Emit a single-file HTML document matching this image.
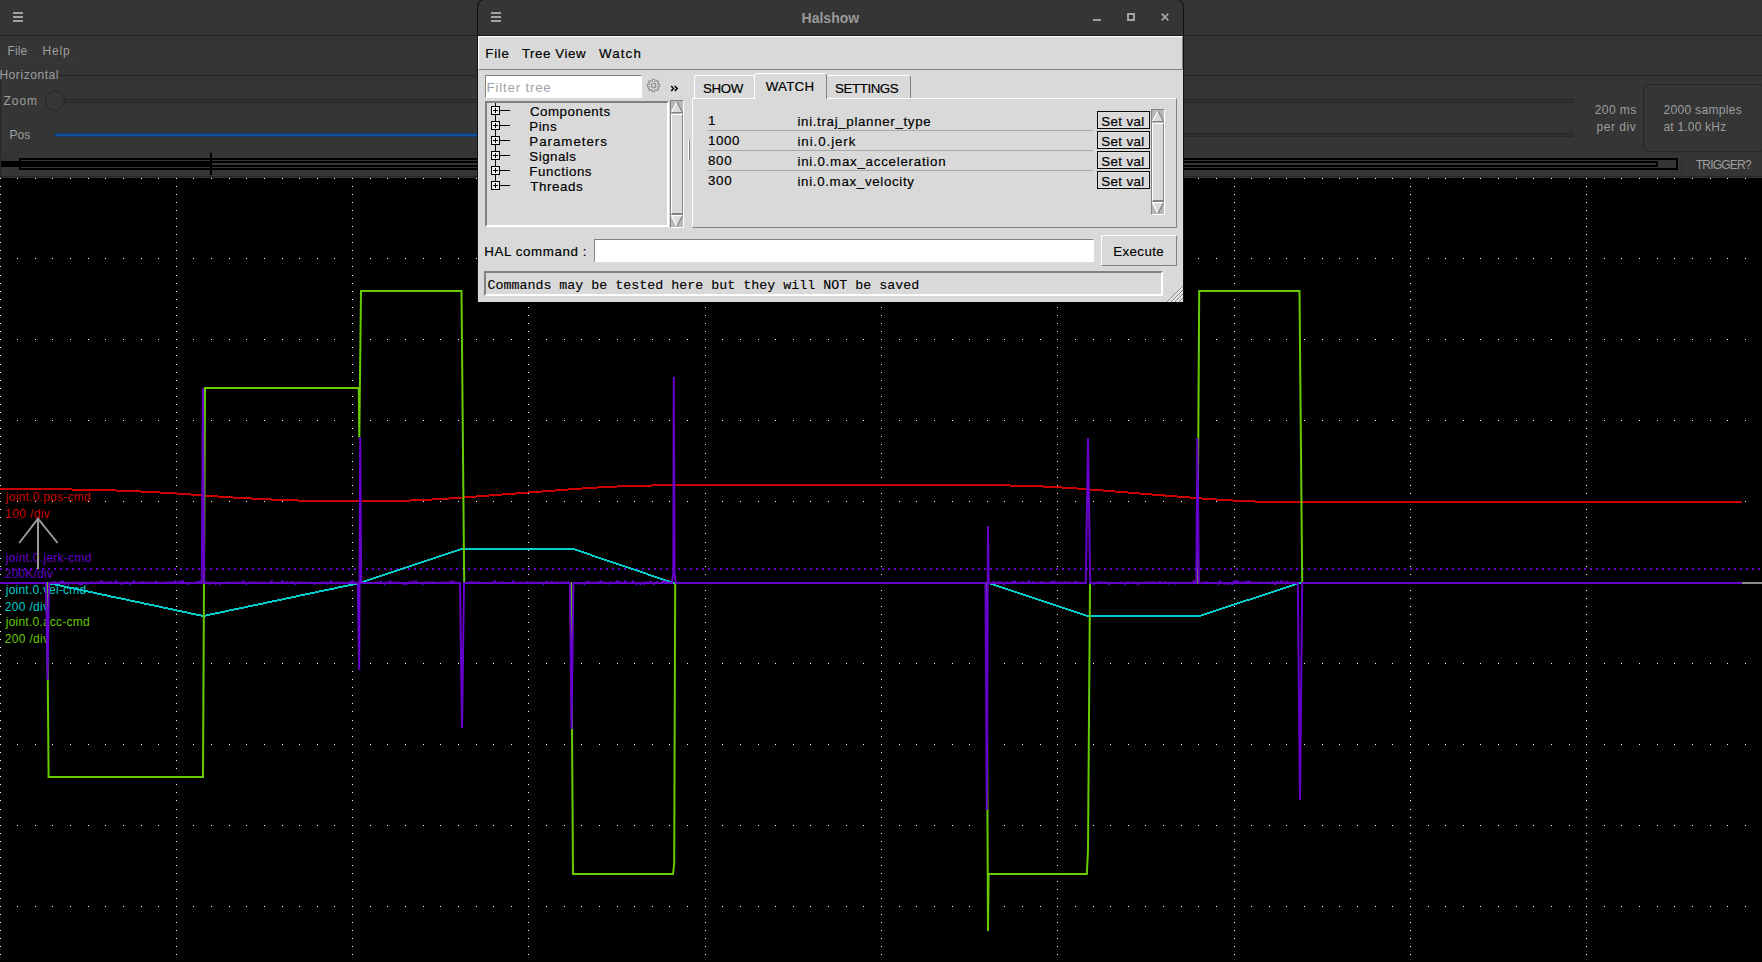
<!DOCTYPE html>
<html><head><meta charset="utf-8"><title>Halscope</title>
<style>
html,body{margin:0;padding:0;}
body{width:1762px;height:962px;overflow:hidden;background:#353535;position:relative;
 font-family:"Liberation Sans",sans-serif;font-size:12px;color:#9e9e9e;}
html{overflow:hidden;}
div,span,svg{position:absolute;box-sizing:border-box;}
#root{left:0;top:0;width:1762px;height:962px;overflow:hidden;}
.t{white-space:nowrap;line-height:16px;height:16px;}
/* ---------------- halscope chrome */
#sc-title{left:0;top:0;width:1762px;height:35px;background:#353535;}
#sc-titleline{left:0;top:35px;width:1762px;height:1px;background:#222222;}
.hb{background:#a2a2a2;height:2px;width:10px;}
#sc-menu-sep{left:0;top:62px;width:77px;height:1px;background:#3b3b3b;}
#fr-top{left:58px;top:75px;width:1704px;height:1px;background:#242424;}
#fr-left{left:0;top:80px;width:1px;height:97px;background:#272727;}
#zoom-knob{left:45px;top:91px;width:20px;height:20px;border:1px solid #252525;border-radius:50%;background:#363636;}
#zoom-tr{left:64px;top:99px;width:1510px;height:4px;border:1px solid #272727;border-left:none;border-radius:0 2px 2px 0;background:#303030;}
#pos-tr{left:54px;top:133px;width:1520px;height:4px;border:1px solid #272727;border-radius:2px;background:#303030;}
#pos-hl{left:54px;top:133px;width:700px;height:4px;border:1px solid #12386a;border-radius:2px;background:#15539e;}
#info-fr{left:1643px;top:84px;width:122px;height:68px;border:1px solid #262626;border-radius:6px;}
#bar-sep{left:1px;top:152px;width:1761px;height:1px;background:#313131;}
#trig-sep{left:1681px;top:153px;width:1px;height:24px;background:#2f2f2f;}
#sc-bottom{left:0;top:176px;width:1762px;height:1px;background:#262626;}
.blk{background:#000;}
.plot{left:0;top:178px;}
.lbl{font-size:12px;line-height:16px;height:16px;white-space:nowrap;left:5px;}
/* ---------------- halshow */
#hs{left:477px;top:-1px;width:707px;height:303px;background:#353535;border-radius:8px 8px 0 0;border:1px solid #111;border-bottom:none;overflow:hidden;}
#hs-client{left:0;top:36px;width:705px;height:266px;background:#d9d9d9;}
#hs-tl{left:478px;top:35px;width:705px;height:1px;background:#161616;}
.k{white-space:nowrap;line-height:16px;height:16px;color:#000;font-size:13.33px;-webkit-text-stroke:0.18px #000;}
.sunk1{border-top:1px solid #828282;border-left:1px solid #828282;border-bottom:1px solid #fff;border-right:1px solid #fff;}
.sunk2{border-top:2px solid #828282;border-left:2px solid #828282;border-bottom:2px solid #fff;border-right:2px solid #fff;}
.sv{border:1px solid #0a0a0a;box-shadow:inset 0 0 0 1px #e0e0e0;}
.ttl{white-space:nowrap;line-height:16px;height:16px;font-weight:bold;font-size:14px;color:#999;}
#k-mono{height:16px;line-height:16px;font-family:"Liberation Mono",monospace;font-size:13.33px;color:#000;white-space:pre;-webkit-text-stroke:0.12px #000;}

</style></head>
<body>
<div id="root">
<div id="sc-title"></div>
<div class="hb" style="left:13px;top:12px"></div>
<div class="hb" style="left:13px;top:16px"></div>
<div class="hb" style="left:13px;top:20px"></div>
<div id="sc-titleline"></div>
<span class="t" style="left:7.48px;top:43.00px;letter-spacing:0.100px;">File</span>
<span class="t" style="left:42.38px;top:43.00px;letter-spacing:0.903px;">Help</span>
<div id="sc-menu-sep"></div><div id="fr-top"></div><div id="fr-left"></div>
<span class="t" style="left:-0.62px;top:67.00px;letter-spacing:0.566px;">Horizontal</span>
<span class="t" style="left:3.58px;top:93.00px;letter-spacing:0.897px;">Zoom</span>
<div id="zoom-tr"></div><div id="zoom-knob"></div>
<span class="t" style="left:9.58px;top:127.00px;letter-spacing:-0.050px;">Pos</span>
<div id="pos-tr"></div><div id="pos-hl"></div>
<span class="t" style="left:1594.65px;top:102.00px;letter-spacing:0.467px;">200 ms</span>
<span class="t" style="left:1596.50px;top:119.00px;letter-spacing:0.523px;">per div</span>
<div id="info-fr"></div>
<span class="t" style="left:1663.45px;top:102.00px;letter-spacing:0.329px;">2000 samples</span>
<span class="t" style="left:1663.50px;top:119.00px;letter-spacing:0.195px;">at 1.00 kHz</span>
<div id="bar-sep"></div><div id="trig-sep"></div>
<span class="t" style="left:1695.77px;top:157.00px;letter-spacing:-0.792px;">TRIGGER?</span>
<div class="blk" style="left:1px;top:161px;width:211px;height:6px"></div>
<div style="left:19px;top:158px;width:1659px;height:12px;border:2px solid #000"></div>
<div style="left:210px;top:161px;width:1448px;height:6px;border:2px solid #000"></div>
<div class="blk" style="left:210px;top:153px;width:2px;height:22px"></div>
<div id="sc-bottom"></div>
<svg class="plot" width="1762" height="784" viewBox="0 178 1762 784">
<rect x="0" y="178" width="1762" height="784" fill="#000"/>
<path d="M0 178h1v1h-1zM0 186h1v1h-1zM0 194h1v1h-1zM0 202h1v1h-1zM0 210h1v1h-1zM0 218h1v1h-1zM0 226h1v1h-1zM0 234h1v1h-1zM0 242h1v1h-1zM0 250h1v1h-1zM0 258h1v1h-1zM0 266h1v1h-1zM0 275h1v1h-1zM0 283h1v1h-1zM0 291h1v1h-1zM0 299h1v1h-1zM0 307h1v1h-1zM0 315h1v1h-1zM0 323h1v1h-1zM0 331h1v1h-1zM0 339h1v1h-1zM0 347h1v1h-1zM0 355h1v1h-1zM0 364h1v1h-1zM0 372h1v1h-1zM0 380h1v1h-1zM0 388h1v1h-1zM0 396h1v1h-1zM0 404h1v1h-1zM0 412h1v1h-1zM0 420h1v1h-1zM0 428h1v1h-1zM0 436h1v1h-1zM0 444h1v1h-1zM0 453h1v1h-1zM0 461h1v1h-1zM0 469h1v1h-1zM0 477h1v1h-1zM0 485h1v1h-1zM0 493h1v1h-1zM0 501h1v1h-1zM0 509h1v1h-1zM0 517h1v1h-1zM0 525h1v1h-1zM0 533h1v1h-1zM0 542h1v1h-1zM0 550h1v1h-1zM0 558h1v1h-1zM0 566h1v1h-1zM0 574h1v1h-1zM0 582h1v1h-1zM0 590h1v1h-1zM0 598h1v1h-1zM0 606h1v1h-1zM0 614h1v1h-1zM0 622h1v1h-1zM0 631h1v1h-1zM0 639h1v1h-1zM0 647h1v1h-1zM0 655h1v1h-1zM0 663h1v1h-1zM0 671h1v1h-1zM0 679h1v1h-1zM0 687h1v1h-1zM0 695h1v1h-1zM0 703h1v1h-1zM0 711h1v1h-1zM0 720h1v1h-1zM0 728h1v1h-1zM0 736h1v1h-1zM0 744h1v1h-1zM0 752h1v1h-1zM0 760h1v1h-1zM0 768h1v1h-1zM0 776h1v1h-1zM0 784h1v1h-1zM0 792h1v1h-1zM0 800h1v1h-1zM0 809h1v1h-1zM0 817h1v1h-1zM0 825h1v1h-1zM0 833h1v1h-1zM0 841h1v1h-1zM0 849h1v1h-1zM0 857h1v1h-1zM0 865h1v1h-1zM0 873h1v1h-1zM0 881h1v1h-1zM0 889h1v1h-1zM0 898h1v1h-1zM0 906h1v1h-1zM0 914h1v1h-1zM0 922h1v1h-1zM0 930h1v1h-1zM0 938h1v1h-1zM0 946h1v1h-1zM0 954h1v1h-1zM17 178h1v1h-1zM17 258h1v1h-1zM17 339h1v1h-1zM17 420h1v1h-1zM17 501h1v1h-1zM17 582h1v1h-1zM17 663h1v1h-1zM17 744h1v1h-1zM17 825h1v1h-1zM17 906h1v1h-1zM35 178h1v1h-1zM35 258h1v1h-1zM35 339h1v1h-1zM35 420h1v1h-1zM35 501h1v1h-1zM35 582h1v1h-1zM35 663h1v1h-1zM35 744h1v1h-1zM35 825h1v1h-1zM35 906h1v1h-1zM52 178h1v1h-1zM52 258h1v1h-1zM52 339h1v1h-1zM52 420h1v1h-1zM52 501h1v1h-1zM52 582h1v1h-1zM52 663h1v1h-1zM52 744h1v1h-1zM52 825h1v1h-1zM52 906h1v1h-1zM70 178h1v1h-1zM70 258h1v1h-1zM70 339h1v1h-1zM70 420h1v1h-1zM70 501h1v1h-1zM70 582h1v1h-1zM70 663h1v1h-1zM70 744h1v1h-1zM70 825h1v1h-1zM70 906h1v1h-1zM88 178h1v1h-1zM88 258h1v1h-1zM88 339h1v1h-1zM88 420h1v1h-1zM88 501h1v1h-1zM88 582h1v1h-1zM88 663h1v1h-1zM88 744h1v1h-1zM88 825h1v1h-1zM88 906h1v1h-1zM105 178h1v1h-1zM105 258h1v1h-1zM105 339h1v1h-1zM105 420h1v1h-1zM105 501h1v1h-1zM105 582h1v1h-1zM105 663h1v1h-1zM105 744h1v1h-1zM105 825h1v1h-1zM105 906h1v1h-1zM123 178h1v1h-1zM123 258h1v1h-1zM123 339h1v1h-1zM123 420h1v1h-1zM123 501h1v1h-1zM123 582h1v1h-1zM123 663h1v1h-1zM123 744h1v1h-1zM123 825h1v1h-1zM123 906h1v1h-1zM141 178h1v1h-1zM141 258h1v1h-1zM141 339h1v1h-1zM141 420h1v1h-1zM141 501h1v1h-1zM141 582h1v1h-1zM141 663h1v1h-1zM141 744h1v1h-1zM141 825h1v1h-1zM141 906h1v1h-1zM158 178h1v1h-1zM158 258h1v1h-1zM158 339h1v1h-1zM158 420h1v1h-1zM158 501h1v1h-1zM158 582h1v1h-1zM158 663h1v1h-1zM158 744h1v1h-1zM158 825h1v1h-1zM158 906h1v1h-1zM176 178h1v1h-1zM176 186h1v1h-1zM176 194h1v1h-1zM176 202h1v1h-1zM176 210h1v1h-1zM176 218h1v1h-1zM176 226h1v1h-1zM176 234h1v1h-1zM176 242h1v1h-1zM176 250h1v1h-1zM176 258h1v1h-1zM176 266h1v1h-1zM176 275h1v1h-1zM176 283h1v1h-1zM176 291h1v1h-1zM176 299h1v1h-1zM176 307h1v1h-1zM176 315h1v1h-1zM176 323h1v1h-1zM176 331h1v1h-1zM176 339h1v1h-1zM176 347h1v1h-1zM176 355h1v1h-1zM176 364h1v1h-1zM176 372h1v1h-1zM176 380h1v1h-1zM176 388h1v1h-1zM176 396h1v1h-1zM176 404h1v1h-1zM176 412h1v1h-1zM176 420h1v1h-1zM176 428h1v1h-1zM176 436h1v1h-1zM176 444h1v1h-1zM176 453h1v1h-1zM176 461h1v1h-1zM176 469h1v1h-1zM176 477h1v1h-1zM176 485h1v1h-1zM176 493h1v1h-1zM176 501h1v1h-1zM176 509h1v1h-1zM176 517h1v1h-1zM176 525h1v1h-1zM176 533h1v1h-1zM176 542h1v1h-1zM176 550h1v1h-1zM176 558h1v1h-1zM176 566h1v1h-1zM176 574h1v1h-1zM176 582h1v1h-1zM176 590h1v1h-1zM176 598h1v1h-1zM176 606h1v1h-1zM176 614h1v1h-1zM176 622h1v1h-1zM176 631h1v1h-1zM176 639h1v1h-1zM176 647h1v1h-1zM176 655h1v1h-1zM176 663h1v1h-1zM176 671h1v1h-1zM176 679h1v1h-1zM176 687h1v1h-1zM176 695h1v1h-1zM176 703h1v1h-1zM176 711h1v1h-1zM176 720h1v1h-1zM176 728h1v1h-1zM176 736h1v1h-1zM176 744h1v1h-1zM176 752h1v1h-1zM176 760h1v1h-1zM176 768h1v1h-1zM176 776h1v1h-1zM176 784h1v1h-1zM176 792h1v1h-1zM176 800h1v1h-1zM176 809h1v1h-1zM176 817h1v1h-1zM176 825h1v1h-1zM176 833h1v1h-1zM176 841h1v1h-1zM176 849h1v1h-1zM176 857h1v1h-1zM176 865h1v1h-1zM176 873h1v1h-1zM176 881h1v1h-1zM176 889h1v1h-1zM176 898h1v1h-1zM176 906h1v1h-1zM176 914h1v1h-1zM176 922h1v1h-1zM176 930h1v1h-1zM176 938h1v1h-1zM176 946h1v1h-1zM176 954h1v1h-1zM193 178h1v1h-1zM193 258h1v1h-1zM193 339h1v1h-1zM193 420h1v1h-1zM193 501h1v1h-1zM193 582h1v1h-1zM193 663h1v1h-1zM193 744h1v1h-1zM193 825h1v1h-1zM193 906h1v1h-1zM211 178h1v1h-1zM211 258h1v1h-1zM211 339h1v1h-1zM211 420h1v1h-1zM211 501h1v1h-1zM211 582h1v1h-1zM211 663h1v1h-1zM211 744h1v1h-1zM211 825h1v1h-1zM211 906h1v1h-1zM229 178h1v1h-1zM229 258h1v1h-1zM229 339h1v1h-1zM229 420h1v1h-1zM229 501h1v1h-1zM229 582h1v1h-1zM229 663h1v1h-1zM229 744h1v1h-1zM229 825h1v1h-1zM229 906h1v1h-1zM246 178h1v1h-1zM246 258h1v1h-1zM246 339h1v1h-1zM246 420h1v1h-1zM246 501h1v1h-1zM246 582h1v1h-1zM246 663h1v1h-1zM246 744h1v1h-1zM246 825h1v1h-1zM246 906h1v1h-1zM264 178h1v1h-1zM264 258h1v1h-1zM264 339h1v1h-1zM264 420h1v1h-1zM264 501h1v1h-1zM264 582h1v1h-1zM264 663h1v1h-1zM264 744h1v1h-1zM264 825h1v1h-1zM264 906h1v1h-1zM282 178h1v1h-1zM282 258h1v1h-1zM282 339h1v1h-1zM282 420h1v1h-1zM282 501h1v1h-1zM282 582h1v1h-1zM282 663h1v1h-1zM282 744h1v1h-1zM282 825h1v1h-1zM282 906h1v1h-1zM299 178h1v1h-1zM299 258h1v1h-1zM299 339h1v1h-1zM299 420h1v1h-1zM299 501h1v1h-1zM299 582h1v1h-1zM299 663h1v1h-1zM299 744h1v1h-1zM299 825h1v1h-1zM299 906h1v1h-1zM317 178h1v1h-1zM317 258h1v1h-1zM317 339h1v1h-1zM317 420h1v1h-1zM317 501h1v1h-1zM317 582h1v1h-1zM317 663h1v1h-1zM317 744h1v1h-1zM317 825h1v1h-1zM317 906h1v1h-1zM334 178h1v1h-1zM334 258h1v1h-1zM334 339h1v1h-1zM334 420h1v1h-1zM334 501h1v1h-1zM334 582h1v1h-1zM334 663h1v1h-1zM334 744h1v1h-1zM334 825h1v1h-1zM334 906h1v1h-1zM352 178h1v1h-1zM352 186h1v1h-1zM352 194h1v1h-1zM352 202h1v1h-1zM352 210h1v1h-1zM352 218h1v1h-1zM352 226h1v1h-1zM352 234h1v1h-1zM352 242h1v1h-1zM352 250h1v1h-1zM352 258h1v1h-1zM352 266h1v1h-1zM352 275h1v1h-1zM352 283h1v1h-1zM352 291h1v1h-1zM352 299h1v1h-1zM352 307h1v1h-1zM352 315h1v1h-1zM352 323h1v1h-1zM352 331h1v1h-1zM352 339h1v1h-1zM352 347h1v1h-1zM352 355h1v1h-1zM352 364h1v1h-1zM352 372h1v1h-1zM352 380h1v1h-1zM352 388h1v1h-1zM352 396h1v1h-1zM352 404h1v1h-1zM352 412h1v1h-1zM352 420h1v1h-1zM352 428h1v1h-1zM352 436h1v1h-1zM352 444h1v1h-1zM352 453h1v1h-1zM352 461h1v1h-1zM352 469h1v1h-1zM352 477h1v1h-1zM352 485h1v1h-1zM352 493h1v1h-1zM352 501h1v1h-1zM352 509h1v1h-1zM352 517h1v1h-1zM352 525h1v1h-1zM352 533h1v1h-1zM352 542h1v1h-1zM352 550h1v1h-1zM352 558h1v1h-1zM352 566h1v1h-1zM352 574h1v1h-1zM352 582h1v1h-1zM352 590h1v1h-1zM352 598h1v1h-1zM352 606h1v1h-1zM352 614h1v1h-1zM352 622h1v1h-1zM352 631h1v1h-1zM352 639h1v1h-1zM352 647h1v1h-1zM352 655h1v1h-1zM352 663h1v1h-1zM352 671h1v1h-1zM352 679h1v1h-1zM352 687h1v1h-1zM352 695h1v1h-1zM352 703h1v1h-1zM352 711h1v1h-1zM352 720h1v1h-1zM352 728h1v1h-1zM352 736h1v1h-1zM352 744h1v1h-1zM352 752h1v1h-1zM352 760h1v1h-1zM352 768h1v1h-1zM352 776h1v1h-1zM352 784h1v1h-1zM352 792h1v1h-1zM352 800h1v1h-1zM352 809h1v1h-1zM352 817h1v1h-1zM352 825h1v1h-1zM352 833h1v1h-1zM352 841h1v1h-1zM352 849h1v1h-1zM352 857h1v1h-1zM352 865h1v1h-1zM352 873h1v1h-1zM352 881h1v1h-1zM352 889h1v1h-1zM352 898h1v1h-1zM352 906h1v1h-1zM352 914h1v1h-1zM352 922h1v1h-1zM352 930h1v1h-1zM352 938h1v1h-1zM352 946h1v1h-1zM352 954h1v1h-1zM370 178h1v1h-1zM370 258h1v1h-1zM370 339h1v1h-1zM370 420h1v1h-1zM370 501h1v1h-1zM370 582h1v1h-1zM370 663h1v1h-1zM370 744h1v1h-1zM370 825h1v1h-1zM370 906h1v1h-1zM387 178h1v1h-1zM387 258h1v1h-1zM387 339h1v1h-1zM387 420h1v1h-1zM387 501h1v1h-1zM387 582h1v1h-1zM387 663h1v1h-1zM387 744h1v1h-1zM387 825h1v1h-1zM387 906h1v1h-1zM405 178h1v1h-1zM405 258h1v1h-1zM405 339h1v1h-1zM405 420h1v1h-1zM405 501h1v1h-1zM405 582h1v1h-1zM405 663h1v1h-1zM405 744h1v1h-1zM405 825h1v1h-1zM405 906h1v1h-1zM423 178h1v1h-1zM423 258h1v1h-1zM423 339h1v1h-1zM423 420h1v1h-1zM423 501h1v1h-1zM423 582h1v1h-1zM423 663h1v1h-1zM423 744h1v1h-1zM423 825h1v1h-1zM423 906h1v1h-1zM440 178h1v1h-1zM440 258h1v1h-1zM440 339h1v1h-1zM440 420h1v1h-1zM440 501h1v1h-1zM440 582h1v1h-1zM440 663h1v1h-1zM440 744h1v1h-1zM440 825h1v1h-1zM440 906h1v1h-1zM458 178h1v1h-1zM458 258h1v1h-1zM458 339h1v1h-1zM458 420h1v1h-1zM458 501h1v1h-1zM458 582h1v1h-1zM458 663h1v1h-1zM458 744h1v1h-1zM458 825h1v1h-1zM458 906h1v1h-1zM476 178h1v1h-1zM476 258h1v1h-1zM476 339h1v1h-1zM476 420h1v1h-1zM476 501h1v1h-1zM476 582h1v1h-1zM476 663h1v1h-1zM476 744h1v1h-1zM476 825h1v1h-1zM476 906h1v1h-1zM493 178h1v1h-1zM493 258h1v1h-1zM493 339h1v1h-1zM493 420h1v1h-1zM493 501h1v1h-1zM493 582h1v1h-1zM493 663h1v1h-1zM493 744h1v1h-1zM493 825h1v1h-1zM493 906h1v1h-1zM511 178h1v1h-1zM511 258h1v1h-1zM511 339h1v1h-1zM511 420h1v1h-1zM511 501h1v1h-1zM511 582h1v1h-1zM511 663h1v1h-1zM511 744h1v1h-1zM511 825h1v1h-1zM511 906h1v1h-1zM528 178h1v1h-1zM528 186h1v1h-1zM528 194h1v1h-1zM528 202h1v1h-1zM528 210h1v1h-1zM528 218h1v1h-1zM528 226h1v1h-1zM528 234h1v1h-1zM528 242h1v1h-1zM528 250h1v1h-1zM528 258h1v1h-1zM528 266h1v1h-1zM528 275h1v1h-1zM528 283h1v1h-1zM528 291h1v1h-1zM528 299h1v1h-1zM528 307h1v1h-1zM528 315h1v1h-1zM528 323h1v1h-1zM528 331h1v1h-1zM528 339h1v1h-1zM528 347h1v1h-1zM528 355h1v1h-1zM528 364h1v1h-1zM528 372h1v1h-1zM528 380h1v1h-1zM528 388h1v1h-1zM528 396h1v1h-1zM528 404h1v1h-1zM528 412h1v1h-1zM528 420h1v1h-1zM528 428h1v1h-1zM528 436h1v1h-1zM528 444h1v1h-1zM528 453h1v1h-1zM528 461h1v1h-1zM528 469h1v1h-1zM528 477h1v1h-1zM528 485h1v1h-1zM528 493h1v1h-1zM528 501h1v1h-1zM528 509h1v1h-1zM528 517h1v1h-1zM528 525h1v1h-1zM528 533h1v1h-1zM528 542h1v1h-1zM528 550h1v1h-1zM528 558h1v1h-1zM528 566h1v1h-1zM528 574h1v1h-1zM528 582h1v1h-1zM528 590h1v1h-1zM528 598h1v1h-1zM528 606h1v1h-1zM528 614h1v1h-1zM528 622h1v1h-1zM528 631h1v1h-1zM528 639h1v1h-1zM528 647h1v1h-1zM528 655h1v1h-1zM528 663h1v1h-1zM528 671h1v1h-1zM528 679h1v1h-1zM528 687h1v1h-1zM528 695h1v1h-1zM528 703h1v1h-1zM528 711h1v1h-1zM528 720h1v1h-1zM528 728h1v1h-1zM528 736h1v1h-1zM528 744h1v1h-1zM528 752h1v1h-1zM528 760h1v1h-1zM528 768h1v1h-1zM528 776h1v1h-1zM528 784h1v1h-1zM528 792h1v1h-1zM528 800h1v1h-1zM528 809h1v1h-1zM528 817h1v1h-1zM528 825h1v1h-1zM528 833h1v1h-1zM528 841h1v1h-1zM528 849h1v1h-1zM528 857h1v1h-1zM528 865h1v1h-1zM528 873h1v1h-1zM528 881h1v1h-1zM528 889h1v1h-1zM528 898h1v1h-1zM528 906h1v1h-1zM528 914h1v1h-1zM528 922h1v1h-1zM528 930h1v1h-1zM528 938h1v1h-1zM528 946h1v1h-1zM528 954h1v1h-1zM546 178h1v1h-1zM546 258h1v1h-1zM546 339h1v1h-1zM546 420h1v1h-1zM546 501h1v1h-1zM546 582h1v1h-1zM546 663h1v1h-1zM546 744h1v1h-1zM546 825h1v1h-1zM546 906h1v1h-1zM564 178h1v1h-1zM564 258h1v1h-1zM564 339h1v1h-1zM564 420h1v1h-1zM564 501h1v1h-1zM564 582h1v1h-1zM564 663h1v1h-1zM564 744h1v1h-1zM564 825h1v1h-1zM564 906h1v1h-1zM581 178h1v1h-1zM581 258h1v1h-1zM581 339h1v1h-1zM581 420h1v1h-1zM581 501h1v1h-1zM581 582h1v1h-1zM581 663h1v1h-1zM581 744h1v1h-1zM581 825h1v1h-1zM581 906h1v1h-1zM599 178h1v1h-1zM599 258h1v1h-1zM599 339h1v1h-1zM599 420h1v1h-1zM599 501h1v1h-1zM599 582h1v1h-1zM599 663h1v1h-1zM599 744h1v1h-1zM599 825h1v1h-1zM599 906h1v1h-1zM617 178h1v1h-1zM617 258h1v1h-1zM617 339h1v1h-1zM617 420h1v1h-1zM617 501h1v1h-1zM617 582h1v1h-1zM617 663h1v1h-1zM617 744h1v1h-1zM617 825h1v1h-1zM617 906h1v1h-1zM634 178h1v1h-1zM634 258h1v1h-1zM634 339h1v1h-1zM634 420h1v1h-1zM634 501h1v1h-1zM634 582h1v1h-1zM634 663h1v1h-1zM634 744h1v1h-1zM634 825h1v1h-1zM634 906h1v1h-1zM652 178h1v1h-1zM652 258h1v1h-1zM652 339h1v1h-1zM652 420h1v1h-1zM652 501h1v1h-1zM652 582h1v1h-1zM652 663h1v1h-1zM652 744h1v1h-1zM652 825h1v1h-1zM652 906h1v1h-1zM669 178h1v1h-1zM669 258h1v1h-1zM669 339h1v1h-1zM669 420h1v1h-1zM669 501h1v1h-1zM669 582h1v1h-1zM669 663h1v1h-1zM669 744h1v1h-1zM669 825h1v1h-1zM669 906h1v1h-1zM687 178h1v1h-1zM687 258h1v1h-1zM687 339h1v1h-1zM687 420h1v1h-1zM687 501h1v1h-1zM687 582h1v1h-1zM687 663h1v1h-1zM687 744h1v1h-1zM687 825h1v1h-1zM687 906h1v1h-1zM705 178h1v1h-1zM705 186h1v1h-1zM705 194h1v1h-1zM705 202h1v1h-1zM705 210h1v1h-1zM705 218h1v1h-1zM705 226h1v1h-1zM705 234h1v1h-1zM705 242h1v1h-1zM705 250h1v1h-1zM705 258h1v1h-1zM705 266h1v1h-1zM705 275h1v1h-1zM705 283h1v1h-1zM705 291h1v1h-1zM705 299h1v1h-1zM705 307h1v1h-1zM705 315h1v1h-1zM705 323h1v1h-1zM705 331h1v1h-1zM705 339h1v1h-1zM705 347h1v1h-1zM705 355h1v1h-1zM705 364h1v1h-1zM705 372h1v1h-1zM705 380h1v1h-1zM705 388h1v1h-1zM705 396h1v1h-1zM705 404h1v1h-1zM705 412h1v1h-1zM705 420h1v1h-1zM705 428h1v1h-1zM705 436h1v1h-1zM705 444h1v1h-1zM705 453h1v1h-1zM705 461h1v1h-1zM705 469h1v1h-1zM705 477h1v1h-1zM705 485h1v1h-1zM705 493h1v1h-1zM705 501h1v1h-1zM705 509h1v1h-1zM705 517h1v1h-1zM705 525h1v1h-1zM705 533h1v1h-1zM705 542h1v1h-1zM705 550h1v1h-1zM705 558h1v1h-1zM705 566h1v1h-1zM705 574h1v1h-1zM705 582h1v1h-1zM705 590h1v1h-1zM705 598h1v1h-1zM705 606h1v1h-1zM705 614h1v1h-1zM705 622h1v1h-1zM705 631h1v1h-1zM705 639h1v1h-1zM705 647h1v1h-1zM705 655h1v1h-1zM705 663h1v1h-1zM705 671h1v1h-1zM705 679h1v1h-1zM705 687h1v1h-1zM705 695h1v1h-1zM705 703h1v1h-1zM705 711h1v1h-1zM705 720h1v1h-1zM705 728h1v1h-1zM705 736h1v1h-1zM705 744h1v1h-1zM705 752h1v1h-1zM705 760h1v1h-1zM705 768h1v1h-1zM705 776h1v1h-1zM705 784h1v1h-1zM705 792h1v1h-1zM705 800h1v1h-1zM705 809h1v1h-1zM705 817h1v1h-1zM705 825h1v1h-1zM705 833h1v1h-1zM705 841h1v1h-1zM705 849h1v1h-1zM705 857h1v1h-1zM705 865h1v1h-1zM705 873h1v1h-1zM705 881h1v1h-1zM705 889h1v1h-1zM705 898h1v1h-1zM705 906h1v1h-1zM705 914h1v1h-1zM705 922h1v1h-1zM705 930h1v1h-1zM705 938h1v1h-1zM705 946h1v1h-1zM705 954h1v1h-1zM722 178h1v1h-1zM722 258h1v1h-1zM722 339h1v1h-1zM722 420h1v1h-1zM722 501h1v1h-1zM722 582h1v1h-1zM722 663h1v1h-1zM722 744h1v1h-1zM722 825h1v1h-1zM722 906h1v1h-1zM740 178h1v1h-1zM740 258h1v1h-1zM740 339h1v1h-1zM740 420h1v1h-1zM740 501h1v1h-1zM740 582h1v1h-1zM740 663h1v1h-1zM740 744h1v1h-1zM740 825h1v1h-1zM740 906h1v1h-1zM758 178h1v1h-1zM758 258h1v1h-1zM758 339h1v1h-1zM758 420h1v1h-1zM758 501h1v1h-1zM758 582h1v1h-1zM758 663h1v1h-1zM758 744h1v1h-1zM758 825h1v1h-1zM758 906h1v1h-1zM775 178h1v1h-1zM775 258h1v1h-1zM775 339h1v1h-1zM775 420h1v1h-1zM775 501h1v1h-1zM775 582h1v1h-1zM775 663h1v1h-1zM775 744h1v1h-1zM775 825h1v1h-1zM775 906h1v1h-1zM793 178h1v1h-1zM793 258h1v1h-1zM793 339h1v1h-1zM793 420h1v1h-1zM793 501h1v1h-1zM793 582h1v1h-1zM793 663h1v1h-1zM793 744h1v1h-1zM793 825h1v1h-1zM793 906h1v1h-1zM810 178h1v1h-1zM810 258h1v1h-1zM810 339h1v1h-1zM810 420h1v1h-1zM810 501h1v1h-1zM810 582h1v1h-1zM810 663h1v1h-1zM810 744h1v1h-1zM810 825h1v1h-1zM810 906h1v1h-1zM828 178h1v1h-1zM828 258h1v1h-1zM828 339h1v1h-1zM828 420h1v1h-1zM828 501h1v1h-1zM828 582h1v1h-1zM828 663h1v1h-1zM828 744h1v1h-1zM828 825h1v1h-1zM828 906h1v1h-1zM846 178h1v1h-1zM846 258h1v1h-1zM846 339h1v1h-1zM846 420h1v1h-1zM846 501h1v1h-1zM846 582h1v1h-1zM846 663h1v1h-1zM846 744h1v1h-1zM846 825h1v1h-1zM846 906h1v1h-1zM863 178h1v1h-1zM863 258h1v1h-1zM863 339h1v1h-1zM863 420h1v1h-1zM863 501h1v1h-1zM863 582h1v1h-1zM863 663h1v1h-1zM863 744h1v1h-1zM863 825h1v1h-1zM863 906h1v1h-1zM881 178h1v1h-1zM881 186h1v1h-1zM881 194h1v1h-1zM881 202h1v1h-1zM881 210h1v1h-1zM881 218h1v1h-1zM881 226h1v1h-1zM881 234h1v1h-1zM881 242h1v1h-1zM881 250h1v1h-1zM881 258h1v1h-1zM881 266h1v1h-1zM881 275h1v1h-1zM881 283h1v1h-1zM881 291h1v1h-1zM881 299h1v1h-1zM881 307h1v1h-1zM881 315h1v1h-1zM881 323h1v1h-1zM881 331h1v1h-1zM881 339h1v1h-1zM881 347h1v1h-1zM881 355h1v1h-1zM881 364h1v1h-1zM881 372h1v1h-1zM881 380h1v1h-1zM881 388h1v1h-1zM881 396h1v1h-1zM881 404h1v1h-1zM881 412h1v1h-1zM881 420h1v1h-1zM881 428h1v1h-1zM881 436h1v1h-1zM881 444h1v1h-1zM881 453h1v1h-1zM881 461h1v1h-1zM881 469h1v1h-1zM881 477h1v1h-1zM881 485h1v1h-1zM881 493h1v1h-1zM881 501h1v1h-1zM881 509h1v1h-1zM881 517h1v1h-1zM881 525h1v1h-1zM881 533h1v1h-1zM881 542h1v1h-1zM881 550h1v1h-1zM881 558h1v1h-1zM881 566h1v1h-1zM881 574h1v1h-1zM881 582h1v1h-1zM881 590h1v1h-1zM881 598h1v1h-1zM881 606h1v1h-1zM881 614h1v1h-1zM881 622h1v1h-1zM881 631h1v1h-1zM881 639h1v1h-1zM881 647h1v1h-1zM881 655h1v1h-1zM881 663h1v1h-1zM881 671h1v1h-1zM881 679h1v1h-1zM881 687h1v1h-1zM881 695h1v1h-1zM881 703h1v1h-1zM881 711h1v1h-1zM881 720h1v1h-1zM881 728h1v1h-1zM881 736h1v1h-1zM881 744h1v1h-1zM881 752h1v1h-1zM881 760h1v1h-1zM881 768h1v1h-1zM881 776h1v1h-1zM881 784h1v1h-1zM881 792h1v1h-1zM881 800h1v1h-1zM881 809h1v1h-1zM881 817h1v1h-1zM881 825h1v1h-1zM881 833h1v1h-1zM881 841h1v1h-1zM881 849h1v1h-1zM881 857h1v1h-1zM881 865h1v1h-1zM881 873h1v1h-1zM881 881h1v1h-1zM881 889h1v1h-1zM881 898h1v1h-1zM881 906h1v1h-1zM881 914h1v1h-1zM881 922h1v1h-1zM881 930h1v1h-1zM881 938h1v1h-1zM881 946h1v1h-1zM881 954h1v1h-1zM899 178h1v1h-1zM899 258h1v1h-1zM899 339h1v1h-1zM899 420h1v1h-1zM899 501h1v1h-1zM899 582h1v1h-1zM899 663h1v1h-1zM899 744h1v1h-1zM899 825h1v1h-1zM899 906h1v1h-1zM916 178h1v1h-1zM916 258h1v1h-1zM916 339h1v1h-1zM916 420h1v1h-1zM916 501h1v1h-1zM916 582h1v1h-1zM916 663h1v1h-1zM916 744h1v1h-1zM916 825h1v1h-1zM916 906h1v1h-1zM934 178h1v1h-1zM934 258h1v1h-1zM934 339h1v1h-1zM934 420h1v1h-1zM934 501h1v1h-1zM934 582h1v1h-1zM934 663h1v1h-1zM934 744h1v1h-1zM934 825h1v1h-1zM934 906h1v1h-1zM952 178h1v1h-1zM952 258h1v1h-1zM952 339h1v1h-1zM952 420h1v1h-1zM952 501h1v1h-1zM952 582h1v1h-1zM952 663h1v1h-1zM952 744h1v1h-1zM952 825h1v1h-1zM952 906h1v1h-1zM969 178h1v1h-1zM969 258h1v1h-1zM969 339h1v1h-1zM969 420h1v1h-1zM969 501h1v1h-1zM969 582h1v1h-1zM969 663h1v1h-1zM969 744h1v1h-1zM969 825h1v1h-1zM969 906h1v1h-1zM987 178h1v1h-1zM987 258h1v1h-1zM987 339h1v1h-1zM987 420h1v1h-1zM987 501h1v1h-1zM987 582h1v1h-1zM987 663h1v1h-1zM987 744h1v1h-1zM987 825h1v1h-1zM987 906h1v1h-1zM1004 178h1v1h-1zM1004 258h1v1h-1zM1004 339h1v1h-1zM1004 420h1v1h-1zM1004 501h1v1h-1zM1004 582h1v1h-1zM1004 663h1v1h-1zM1004 744h1v1h-1zM1004 825h1v1h-1zM1004 906h1v1h-1zM1022 178h1v1h-1zM1022 258h1v1h-1zM1022 339h1v1h-1zM1022 420h1v1h-1zM1022 501h1v1h-1zM1022 582h1v1h-1zM1022 663h1v1h-1zM1022 744h1v1h-1zM1022 825h1v1h-1zM1022 906h1v1h-1zM1040 178h1v1h-1zM1040 258h1v1h-1zM1040 339h1v1h-1zM1040 420h1v1h-1zM1040 501h1v1h-1zM1040 582h1v1h-1zM1040 663h1v1h-1zM1040 744h1v1h-1zM1040 825h1v1h-1zM1040 906h1v1h-1zM1057 178h1v1h-1zM1057 186h1v1h-1zM1057 194h1v1h-1zM1057 202h1v1h-1zM1057 210h1v1h-1zM1057 218h1v1h-1zM1057 226h1v1h-1zM1057 234h1v1h-1zM1057 242h1v1h-1zM1057 250h1v1h-1zM1057 258h1v1h-1zM1057 266h1v1h-1zM1057 275h1v1h-1zM1057 283h1v1h-1zM1057 291h1v1h-1zM1057 299h1v1h-1zM1057 307h1v1h-1zM1057 315h1v1h-1zM1057 323h1v1h-1zM1057 331h1v1h-1zM1057 339h1v1h-1zM1057 347h1v1h-1zM1057 355h1v1h-1zM1057 364h1v1h-1zM1057 372h1v1h-1zM1057 380h1v1h-1zM1057 388h1v1h-1zM1057 396h1v1h-1zM1057 404h1v1h-1zM1057 412h1v1h-1zM1057 420h1v1h-1zM1057 428h1v1h-1zM1057 436h1v1h-1zM1057 444h1v1h-1zM1057 453h1v1h-1zM1057 461h1v1h-1zM1057 469h1v1h-1zM1057 477h1v1h-1zM1057 485h1v1h-1zM1057 493h1v1h-1zM1057 501h1v1h-1zM1057 509h1v1h-1zM1057 517h1v1h-1zM1057 525h1v1h-1zM1057 533h1v1h-1zM1057 542h1v1h-1zM1057 550h1v1h-1zM1057 558h1v1h-1zM1057 566h1v1h-1zM1057 574h1v1h-1zM1057 582h1v1h-1zM1057 590h1v1h-1zM1057 598h1v1h-1zM1057 606h1v1h-1zM1057 614h1v1h-1zM1057 622h1v1h-1zM1057 631h1v1h-1zM1057 639h1v1h-1zM1057 647h1v1h-1zM1057 655h1v1h-1zM1057 663h1v1h-1zM1057 671h1v1h-1zM1057 679h1v1h-1zM1057 687h1v1h-1zM1057 695h1v1h-1zM1057 703h1v1h-1zM1057 711h1v1h-1zM1057 720h1v1h-1zM1057 728h1v1h-1zM1057 736h1v1h-1zM1057 744h1v1h-1zM1057 752h1v1h-1zM1057 760h1v1h-1zM1057 768h1v1h-1zM1057 776h1v1h-1zM1057 784h1v1h-1zM1057 792h1v1h-1zM1057 800h1v1h-1zM1057 809h1v1h-1zM1057 817h1v1h-1zM1057 825h1v1h-1zM1057 833h1v1h-1zM1057 841h1v1h-1zM1057 849h1v1h-1zM1057 857h1v1h-1zM1057 865h1v1h-1zM1057 873h1v1h-1zM1057 881h1v1h-1zM1057 889h1v1h-1zM1057 898h1v1h-1zM1057 906h1v1h-1zM1057 914h1v1h-1zM1057 922h1v1h-1zM1057 930h1v1h-1zM1057 938h1v1h-1zM1057 946h1v1h-1zM1057 954h1v1h-1zM1075 178h1v1h-1zM1075 258h1v1h-1zM1075 339h1v1h-1zM1075 420h1v1h-1zM1075 501h1v1h-1zM1075 582h1v1h-1zM1075 663h1v1h-1zM1075 744h1v1h-1zM1075 825h1v1h-1zM1075 906h1v1h-1zM1093 178h1v1h-1zM1093 258h1v1h-1zM1093 339h1v1h-1zM1093 420h1v1h-1zM1093 501h1v1h-1zM1093 582h1v1h-1zM1093 663h1v1h-1zM1093 744h1v1h-1zM1093 825h1v1h-1zM1093 906h1v1h-1zM1110 178h1v1h-1zM1110 258h1v1h-1zM1110 339h1v1h-1zM1110 420h1v1h-1zM1110 501h1v1h-1zM1110 582h1v1h-1zM1110 663h1v1h-1zM1110 744h1v1h-1zM1110 825h1v1h-1zM1110 906h1v1h-1zM1128 178h1v1h-1zM1128 258h1v1h-1zM1128 339h1v1h-1zM1128 420h1v1h-1zM1128 501h1v1h-1zM1128 582h1v1h-1zM1128 663h1v1h-1zM1128 744h1v1h-1zM1128 825h1v1h-1zM1128 906h1v1h-1zM1145 178h1v1h-1zM1145 258h1v1h-1zM1145 339h1v1h-1zM1145 420h1v1h-1zM1145 501h1v1h-1zM1145 582h1v1h-1zM1145 663h1v1h-1zM1145 744h1v1h-1zM1145 825h1v1h-1zM1145 906h1v1h-1zM1163 178h1v1h-1zM1163 258h1v1h-1zM1163 339h1v1h-1zM1163 420h1v1h-1zM1163 501h1v1h-1zM1163 582h1v1h-1zM1163 663h1v1h-1zM1163 744h1v1h-1zM1163 825h1v1h-1zM1163 906h1v1h-1zM1181 178h1v1h-1zM1181 258h1v1h-1zM1181 339h1v1h-1zM1181 420h1v1h-1zM1181 501h1v1h-1zM1181 582h1v1h-1zM1181 663h1v1h-1zM1181 744h1v1h-1zM1181 825h1v1h-1zM1181 906h1v1h-1zM1198 178h1v1h-1zM1198 258h1v1h-1zM1198 339h1v1h-1zM1198 420h1v1h-1zM1198 501h1v1h-1zM1198 582h1v1h-1zM1198 663h1v1h-1zM1198 744h1v1h-1zM1198 825h1v1h-1zM1198 906h1v1h-1zM1216 178h1v1h-1zM1216 258h1v1h-1zM1216 339h1v1h-1zM1216 420h1v1h-1zM1216 501h1v1h-1zM1216 582h1v1h-1zM1216 663h1v1h-1zM1216 744h1v1h-1zM1216 825h1v1h-1zM1216 906h1v1h-1zM1234 178h1v1h-1zM1234 186h1v1h-1zM1234 194h1v1h-1zM1234 202h1v1h-1zM1234 210h1v1h-1zM1234 218h1v1h-1zM1234 226h1v1h-1zM1234 234h1v1h-1zM1234 242h1v1h-1zM1234 250h1v1h-1zM1234 258h1v1h-1zM1234 266h1v1h-1zM1234 275h1v1h-1zM1234 283h1v1h-1zM1234 291h1v1h-1zM1234 299h1v1h-1zM1234 307h1v1h-1zM1234 315h1v1h-1zM1234 323h1v1h-1zM1234 331h1v1h-1zM1234 339h1v1h-1zM1234 347h1v1h-1zM1234 355h1v1h-1zM1234 364h1v1h-1zM1234 372h1v1h-1zM1234 380h1v1h-1zM1234 388h1v1h-1zM1234 396h1v1h-1zM1234 404h1v1h-1zM1234 412h1v1h-1zM1234 420h1v1h-1zM1234 428h1v1h-1zM1234 436h1v1h-1zM1234 444h1v1h-1zM1234 453h1v1h-1zM1234 461h1v1h-1zM1234 469h1v1h-1zM1234 477h1v1h-1zM1234 485h1v1h-1zM1234 493h1v1h-1zM1234 501h1v1h-1zM1234 509h1v1h-1zM1234 517h1v1h-1zM1234 525h1v1h-1zM1234 533h1v1h-1zM1234 542h1v1h-1zM1234 550h1v1h-1zM1234 558h1v1h-1zM1234 566h1v1h-1zM1234 574h1v1h-1zM1234 582h1v1h-1zM1234 590h1v1h-1zM1234 598h1v1h-1zM1234 606h1v1h-1zM1234 614h1v1h-1zM1234 622h1v1h-1zM1234 631h1v1h-1zM1234 639h1v1h-1zM1234 647h1v1h-1zM1234 655h1v1h-1zM1234 663h1v1h-1zM1234 671h1v1h-1zM1234 679h1v1h-1zM1234 687h1v1h-1zM1234 695h1v1h-1zM1234 703h1v1h-1zM1234 711h1v1h-1zM1234 720h1v1h-1zM1234 728h1v1h-1zM1234 736h1v1h-1zM1234 744h1v1h-1zM1234 752h1v1h-1zM1234 760h1v1h-1zM1234 768h1v1h-1zM1234 776h1v1h-1zM1234 784h1v1h-1zM1234 792h1v1h-1zM1234 800h1v1h-1zM1234 809h1v1h-1zM1234 817h1v1h-1zM1234 825h1v1h-1zM1234 833h1v1h-1zM1234 841h1v1h-1zM1234 849h1v1h-1zM1234 857h1v1h-1zM1234 865h1v1h-1zM1234 873h1v1h-1zM1234 881h1v1h-1zM1234 889h1v1h-1zM1234 898h1v1h-1zM1234 906h1v1h-1zM1234 914h1v1h-1zM1234 922h1v1h-1zM1234 930h1v1h-1zM1234 938h1v1h-1zM1234 946h1v1h-1zM1234 954h1v1h-1zM1251 178h1v1h-1zM1251 258h1v1h-1zM1251 339h1v1h-1zM1251 420h1v1h-1zM1251 501h1v1h-1zM1251 582h1v1h-1zM1251 663h1v1h-1zM1251 744h1v1h-1zM1251 825h1v1h-1zM1251 906h1v1h-1zM1269 178h1v1h-1zM1269 258h1v1h-1zM1269 339h1v1h-1zM1269 420h1v1h-1zM1269 501h1v1h-1zM1269 582h1v1h-1zM1269 663h1v1h-1zM1269 744h1v1h-1zM1269 825h1v1h-1zM1269 906h1v1h-1zM1286 178h1v1h-1zM1286 258h1v1h-1zM1286 339h1v1h-1zM1286 420h1v1h-1zM1286 501h1v1h-1zM1286 582h1v1h-1zM1286 663h1v1h-1zM1286 744h1v1h-1zM1286 825h1v1h-1zM1286 906h1v1h-1zM1304 178h1v1h-1zM1304 258h1v1h-1zM1304 339h1v1h-1zM1304 420h1v1h-1zM1304 501h1v1h-1zM1304 582h1v1h-1zM1304 663h1v1h-1zM1304 744h1v1h-1zM1304 825h1v1h-1zM1304 906h1v1h-1zM1322 178h1v1h-1zM1322 258h1v1h-1zM1322 339h1v1h-1zM1322 420h1v1h-1zM1322 501h1v1h-1zM1322 582h1v1h-1zM1322 663h1v1h-1zM1322 744h1v1h-1zM1322 825h1v1h-1zM1322 906h1v1h-1zM1339 178h1v1h-1zM1339 258h1v1h-1zM1339 339h1v1h-1zM1339 420h1v1h-1zM1339 501h1v1h-1zM1339 582h1v1h-1zM1339 663h1v1h-1zM1339 744h1v1h-1zM1339 825h1v1h-1zM1339 906h1v1h-1zM1357 178h1v1h-1zM1357 258h1v1h-1zM1357 339h1v1h-1zM1357 420h1v1h-1zM1357 501h1v1h-1zM1357 582h1v1h-1zM1357 663h1v1h-1zM1357 744h1v1h-1zM1357 825h1v1h-1zM1357 906h1v1h-1zM1375 178h1v1h-1zM1375 258h1v1h-1zM1375 339h1v1h-1zM1375 420h1v1h-1zM1375 501h1v1h-1zM1375 582h1v1h-1zM1375 663h1v1h-1zM1375 744h1v1h-1zM1375 825h1v1h-1zM1375 906h1v1h-1zM1392 178h1v1h-1zM1392 258h1v1h-1zM1392 339h1v1h-1zM1392 420h1v1h-1zM1392 501h1v1h-1zM1392 582h1v1h-1zM1392 663h1v1h-1zM1392 744h1v1h-1zM1392 825h1v1h-1zM1392 906h1v1h-1zM1410 178h1v1h-1zM1410 186h1v1h-1zM1410 194h1v1h-1zM1410 202h1v1h-1zM1410 210h1v1h-1zM1410 218h1v1h-1zM1410 226h1v1h-1zM1410 234h1v1h-1zM1410 242h1v1h-1zM1410 250h1v1h-1zM1410 258h1v1h-1zM1410 266h1v1h-1zM1410 275h1v1h-1zM1410 283h1v1h-1zM1410 291h1v1h-1zM1410 299h1v1h-1zM1410 307h1v1h-1zM1410 315h1v1h-1zM1410 323h1v1h-1zM1410 331h1v1h-1zM1410 339h1v1h-1zM1410 347h1v1h-1zM1410 355h1v1h-1zM1410 364h1v1h-1zM1410 372h1v1h-1zM1410 380h1v1h-1zM1410 388h1v1h-1zM1410 396h1v1h-1zM1410 404h1v1h-1zM1410 412h1v1h-1zM1410 420h1v1h-1zM1410 428h1v1h-1zM1410 436h1v1h-1zM1410 444h1v1h-1zM1410 453h1v1h-1zM1410 461h1v1h-1zM1410 469h1v1h-1zM1410 477h1v1h-1zM1410 485h1v1h-1zM1410 493h1v1h-1zM1410 501h1v1h-1zM1410 509h1v1h-1zM1410 517h1v1h-1zM1410 525h1v1h-1zM1410 533h1v1h-1zM1410 542h1v1h-1zM1410 550h1v1h-1zM1410 558h1v1h-1zM1410 566h1v1h-1zM1410 574h1v1h-1zM1410 582h1v1h-1zM1410 590h1v1h-1zM1410 598h1v1h-1zM1410 606h1v1h-1zM1410 614h1v1h-1zM1410 622h1v1h-1zM1410 631h1v1h-1zM1410 639h1v1h-1zM1410 647h1v1h-1zM1410 655h1v1h-1zM1410 663h1v1h-1zM1410 671h1v1h-1zM1410 679h1v1h-1zM1410 687h1v1h-1zM1410 695h1v1h-1zM1410 703h1v1h-1zM1410 711h1v1h-1zM1410 720h1v1h-1zM1410 728h1v1h-1zM1410 736h1v1h-1zM1410 744h1v1h-1zM1410 752h1v1h-1zM1410 760h1v1h-1zM1410 768h1v1h-1zM1410 776h1v1h-1zM1410 784h1v1h-1zM1410 792h1v1h-1zM1410 800h1v1h-1zM1410 809h1v1h-1zM1410 817h1v1h-1zM1410 825h1v1h-1zM1410 833h1v1h-1zM1410 841h1v1h-1zM1410 849h1v1h-1zM1410 857h1v1h-1zM1410 865h1v1h-1zM1410 873h1v1h-1zM1410 881h1v1h-1zM1410 889h1v1h-1zM1410 898h1v1h-1zM1410 906h1v1h-1zM1410 914h1v1h-1zM1410 922h1v1h-1zM1410 930h1v1h-1zM1410 938h1v1h-1zM1410 946h1v1h-1zM1410 954h1v1h-1zM1428 178h1v1h-1zM1428 258h1v1h-1zM1428 339h1v1h-1zM1428 420h1v1h-1zM1428 501h1v1h-1zM1428 582h1v1h-1zM1428 663h1v1h-1zM1428 744h1v1h-1zM1428 825h1v1h-1zM1428 906h1v1h-1zM1445 178h1v1h-1zM1445 258h1v1h-1zM1445 339h1v1h-1zM1445 420h1v1h-1zM1445 501h1v1h-1zM1445 582h1v1h-1zM1445 663h1v1h-1zM1445 744h1v1h-1zM1445 825h1v1h-1zM1445 906h1v1h-1zM1463 178h1v1h-1zM1463 258h1v1h-1zM1463 339h1v1h-1zM1463 420h1v1h-1zM1463 501h1v1h-1zM1463 582h1v1h-1zM1463 663h1v1h-1zM1463 744h1v1h-1zM1463 825h1v1h-1zM1463 906h1v1h-1zM1480 178h1v1h-1zM1480 258h1v1h-1zM1480 339h1v1h-1zM1480 420h1v1h-1zM1480 501h1v1h-1zM1480 582h1v1h-1zM1480 663h1v1h-1zM1480 744h1v1h-1zM1480 825h1v1h-1zM1480 906h1v1h-1zM1498 178h1v1h-1zM1498 258h1v1h-1zM1498 339h1v1h-1zM1498 420h1v1h-1zM1498 501h1v1h-1zM1498 582h1v1h-1zM1498 663h1v1h-1zM1498 744h1v1h-1zM1498 825h1v1h-1zM1498 906h1v1h-1zM1516 178h1v1h-1zM1516 258h1v1h-1zM1516 339h1v1h-1zM1516 420h1v1h-1zM1516 501h1v1h-1zM1516 582h1v1h-1zM1516 663h1v1h-1zM1516 744h1v1h-1zM1516 825h1v1h-1zM1516 906h1v1h-1zM1533 178h1v1h-1zM1533 258h1v1h-1zM1533 339h1v1h-1zM1533 420h1v1h-1zM1533 501h1v1h-1zM1533 582h1v1h-1zM1533 663h1v1h-1zM1533 744h1v1h-1zM1533 825h1v1h-1zM1533 906h1v1h-1zM1551 178h1v1h-1zM1551 258h1v1h-1zM1551 339h1v1h-1zM1551 420h1v1h-1zM1551 501h1v1h-1zM1551 582h1v1h-1zM1551 663h1v1h-1zM1551 744h1v1h-1zM1551 825h1v1h-1zM1551 906h1v1h-1zM1569 178h1v1h-1zM1569 258h1v1h-1zM1569 339h1v1h-1zM1569 420h1v1h-1zM1569 501h1v1h-1zM1569 582h1v1h-1zM1569 663h1v1h-1zM1569 744h1v1h-1zM1569 825h1v1h-1zM1569 906h1v1h-1zM1586 178h1v1h-1zM1586 186h1v1h-1zM1586 194h1v1h-1zM1586 202h1v1h-1zM1586 210h1v1h-1zM1586 218h1v1h-1zM1586 226h1v1h-1zM1586 234h1v1h-1zM1586 242h1v1h-1zM1586 250h1v1h-1zM1586 258h1v1h-1zM1586 266h1v1h-1zM1586 275h1v1h-1zM1586 283h1v1h-1zM1586 291h1v1h-1zM1586 299h1v1h-1zM1586 307h1v1h-1zM1586 315h1v1h-1zM1586 323h1v1h-1zM1586 331h1v1h-1zM1586 339h1v1h-1zM1586 347h1v1h-1zM1586 355h1v1h-1zM1586 364h1v1h-1zM1586 372h1v1h-1zM1586 380h1v1h-1zM1586 388h1v1h-1zM1586 396h1v1h-1zM1586 404h1v1h-1zM1586 412h1v1h-1zM1586 420h1v1h-1zM1586 428h1v1h-1zM1586 436h1v1h-1zM1586 444h1v1h-1zM1586 453h1v1h-1zM1586 461h1v1h-1zM1586 469h1v1h-1zM1586 477h1v1h-1zM1586 485h1v1h-1zM1586 493h1v1h-1zM1586 501h1v1h-1zM1586 509h1v1h-1zM1586 517h1v1h-1zM1586 525h1v1h-1zM1586 533h1v1h-1zM1586 542h1v1h-1zM1586 550h1v1h-1zM1586 558h1v1h-1zM1586 566h1v1h-1zM1586 574h1v1h-1zM1586 582h1v1h-1zM1586 590h1v1h-1zM1586 598h1v1h-1zM1586 606h1v1h-1zM1586 614h1v1h-1zM1586 622h1v1h-1zM1586 631h1v1h-1zM1586 639h1v1h-1zM1586 647h1v1h-1zM1586 655h1v1h-1zM1586 663h1v1h-1zM1586 671h1v1h-1zM1586 679h1v1h-1zM1586 687h1v1h-1zM1586 695h1v1h-1zM1586 703h1v1h-1zM1586 711h1v1h-1zM1586 720h1v1h-1zM1586 728h1v1h-1zM1586 736h1v1h-1zM1586 744h1v1h-1zM1586 752h1v1h-1zM1586 760h1v1h-1zM1586 768h1v1h-1zM1586 776h1v1h-1zM1586 784h1v1h-1zM1586 792h1v1h-1zM1586 800h1v1h-1zM1586 809h1v1h-1zM1586 817h1v1h-1zM1586 825h1v1h-1zM1586 833h1v1h-1zM1586 841h1v1h-1zM1586 849h1v1h-1zM1586 857h1v1h-1zM1586 865h1v1h-1zM1586 873h1v1h-1zM1586 881h1v1h-1zM1586 889h1v1h-1zM1586 898h1v1h-1zM1586 906h1v1h-1zM1586 914h1v1h-1zM1586 922h1v1h-1zM1586 930h1v1h-1zM1586 938h1v1h-1zM1586 946h1v1h-1zM1586 954h1v1h-1zM1604 178h1v1h-1zM1604 258h1v1h-1zM1604 339h1v1h-1zM1604 420h1v1h-1zM1604 501h1v1h-1zM1604 582h1v1h-1zM1604 663h1v1h-1zM1604 744h1v1h-1zM1604 825h1v1h-1zM1604 906h1v1h-1zM1621 178h1v1h-1zM1621 258h1v1h-1zM1621 339h1v1h-1zM1621 420h1v1h-1zM1621 501h1v1h-1zM1621 582h1v1h-1zM1621 663h1v1h-1zM1621 744h1v1h-1zM1621 825h1v1h-1zM1621 906h1v1h-1zM1639 178h1v1h-1zM1639 258h1v1h-1zM1639 339h1v1h-1zM1639 420h1v1h-1zM1639 501h1v1h-1zM1639 582h1v1h-1zM1639 663h1v1h-1zM1639 744h1v1h-1zM1639 825h1v1h-1zM1639 906h1v1h-1zM1657 178h1v1h-1zM1657 258h1v1h-1zM1657 339h1v1h-1zM1657 420h1v1h-1zM1657 501h1v1h-1zM1657 582h1v1h-1zM1657 663h1v1h-1zM1657 744h1v1h-1zM1657 825h1v1h-1zM1657 906h1v1h-1zM1674 178h1v1h-1zM1674 258h1v1h-1zM1674 339h1v1h-1zM1674 420h1v1h-1zM1674 501h1v1h-1zM1674 582h1v1h-1zM1674 663h1v1h-1zM1674 744h1v1h-1zM1674 825h1v1h-1zM1674 906h1v1h-1zM1692 178h1v1h-1zM1692 258h1v1h-1zM1692 339h1v1h-1zM1692 420h1v1h-1zM1692 501h1v1h-1zM1692 582h1v1h-1zM1692 663h1v1h-1zM1692 744h1v1h-1zM1692 825h1v1h-1zM1692 906h1v1h-1zM1710 178h1v1h-1zM1710 258h1v1h-1zM1710 339h1v1h-1zM1710 420h1v1h-1zM1710 501h1v1h-1zM1710 582h1v1h-1zM1710 663h1v1h-1zM1710 744h1v1h-1zM1710 825h1v1h-1zM1710 906h1v1h-1zM1727 178h1v1h-1zM1727 258h1v1h-1zM1727 339h1v1h-1zM1727 420h1v1h-1zM1727 501h1v1h-1zM1727 582h1v1h-1zM1727 663h1v1h-1zM1727 744h1v1h-1zM1727 825h1v1h-1zM1727 906h1v1h-1zM1745 178h1v1h-1zM1745 258h1v1h-1zM1745 339h1v1h-1zM1745 420h1v1h-1zM1745 501h1v1h-1zM1745 582h1v1h-1zM1745 663h1v1h-1zM1745 744h1v1h-1zM1745 825h1v1h-1zM1745 906h1v1h-1z" fill="#fff" shape-rendering="crispEdges"/>
<line x1="0" y1="569" x2="1762" y2="569" stroke="#6600cc" stroke-width="2" stroke-dasharray="2 4" shape-rendering="crispEdges"/>
<g font-family="Liberation Sans, sans-serif" font-size="12">
<text x="5.79" y="500.90" fill="#cc0000" style="letter-spacing:0.257px">joint.0.pos-cmd</text>
<text x="5.11" y="517.90" fill="#cc0000" style="letter-spacing:0.382px">100 /div</text>
<text x="5.79" y="561.70" fill="#6600cc" style="letter-spacing:0.286px">joint.0.jerk-cmd</text>
<text x="4.75" y="578.40" fill="#6600cc" style="letter-spacing:0.213px">200K/div</text>
<text x="5.79" y="594.40" fill="#00cccc" style="letter-spacing:0.219px">joint.0.vel-cmd</text>
<text x="4.75" y="611.40" fill="#00cccc" style="letter-spacing:0.320px">200 /div</text>
<text x="5.79" y="626.20" fill="#66cc00" style="letter-spacing:0.224px">joint.0.acc-cmd</text>
<text x="4.75" y="643.20" fill="#66cc00" style="letter-spacing:0.320px">200 /div</text>
</g>
<path d="M38 518V569" stroke="#999" stroke-width="2" fill="none" shape-rendering="crispEdges"/><path d="M19.2 543L38 518.6L57.6 543" stroke="#999" stroke-width="1.9" fill="none"/>
<path d="M0 488h72v2h-72zM72 489h44v2h-44zM116 490h25v2h-25zM141 491h19v2h-19zM160 492h17v2h-17zM177 493h14v2h-14zM191 494h14v2h-14zM205 495h13v2h-13zM218 496h15v2h-15zM233 497h18v2h-18zM251 498h20v2h-20zM271 499h27v2h-27zM298 500h112v2h-112zM410 499h22v2h-22zM432 498h17v2h-17zM449 497h14v2h-14zM463 496h13v2h-13zM476 495h13v2h-13zM489 494h13v2h-13zM502 493h13v2h-13zM515 492h13v2h-13zM528 491h14v2h-14zM542 490h13v2h-13zM555 489h13v2h-13zM568 488h14v2h-14zM582 487h15v2h-15zM597 486h20v2h-20zM617 485h34v2h-34zM651 484h359v2h-359zM1010 485h33v2h-33zM1043 486h19v2h-19zM1062 487h15v2h-15zM1077 488h13v2h-13zM1090 489h13v2h-13zM1103 490h12v2h-12zM1115 491h13v2h-13zM1128 492h12v2h-12zM1140 493h12v2h-12zM1152 494h13v2h-13zM1165 495h12v2h-12zM1177 496h13v2h-13zM1190 497h12v2h-12zM1202 498h14v2h-14zM1216 499h17v2h-17zM1233 500h22v2h-22zM1255 501h487v2h-487z" fill="#cc0000" shape-rendering="crispEdges"/>
<path d="M0 582h50v2h-50zM50 583h5v2h-5zM55 584h5v2h-5zM60 585h4v2h-4zM64 586h5v2h-5zM69 587h5v2h-5zM74 588h5v2h-5zM79 589h4v2h-4zM83 590h5v2h-5zM88 591h5v2h-5zM93 592h4v2h-4zM97 593h5v2h-5zM102 594h5v2h-5zM107 595h4v2h-4zM111 596h5v2h-5zM116 597h5v2h-5zM121 598h5v2h-5zM126 599h4v2h-4zM130 600h5v2h-5zM135 601h5v2h-5zM140 602h4v2h-4zM144 603h5v2h-5zM149 604h5v2h-5zM154 605h5v2h-5zM159 606h4v2h-4zM163 607h5v2h-5zM168 608h5v2h-5zM173 609h4v2h-4zM177 610h5v2h-5zM182 611h5v2h-5zM187 612h4v2h-4zM191 613h5v2h-5zM196 614h5v2h-5zM201 615h5v2h-5zM206 614h4v2h-4zM210 613h5v2h-5zM215 612h5v2h-5zM220 611h5v2h-5zM225 610h4v2h-4zM229 609h5v2h-5zM234 608h5v2h-5zM239 607h5v2h-5zM244 606h4v2h-4zM248 605h5v2h-5zM253 604h5v2h-5zM258 603h5v2h-5zM263 602h4v2h-4zM267 601h5v2h-5zM272 600h5v2h-5zM277 599h5v2h-5zM282 598h4v2h-4zM286 597h5v2h-5zM291 596h5v2h-5zM296 595h4v2h-4zM300 594h5v2h-5zM305 593h5v2h-5zM310 592h5v2h-5zM315 591h4v2h-4zM319 590h5v2h-5zM324 589h5v2h-5zM329 588h5v2h-5zM334 587h4v2h-4zM338 586h5v2h-5zM343 585h5v2h-5zM348 584h5v2h-5zM353 583h4v2h-4zM357 582h4v2h-4zM361 581h3v2h-3zM364 580h3v2h-3zM367 579h3v2h-3zM370 578h3v2h-3zM373 577h3v2h-3zM376 576h3v2h-3zM379 575h3v2h-3zM382 574h3v2h-3zM385 573h3v2h-3zM388 572h3v2h-3zM391 571h3v2h-3zM394 570h3v2h-3zM397 569h3v2h-3zM400 568h3v2h-3zM403 567h3v2h-3zM406 566h3v2h-3zM409 565h3v2h-3zM412 564h3v2h-3zM415 563h3v2h-3zM418 562h3v2h-3zM421 561h3v2h-3zM424 560h3v2h-3zM427 559h3v2h-3zM430 558h3v2h-3zM433 557h3v2h-3zM436 556h3v2h-3zM439 555h3v2h-3zM442 554h3v2h-3zM445 553h3v2h-3zM448 552h3v2h-3zM451 551h3v2h-3zM454 550h3v2h-3zM457 549h3v2h-3zM460 548h115v2h-115zM575 549h3v2h-3zM578 550h3v2h-3zM581 551h3v2h-3zM584 552h3v2h-3zM587 553h3v2h-3zM590 554h2v2h-2zM592 555h3v2h-3zM595 556h3v2h-3zM598 557h3v2h-3zM601 558h3v2h-3zM604 559h3v2h-3zM607 560h3v2h-3zM610 561h3v2h-3zM613 562h3v2h-3zM616 563h3v2h-3zM619 564h3v2h-3zM622 565h3v2h-3zM625 566h3v2h-3zM628 567h3v2h-3zM631 568h3v2h-3zM634 569h3v2h-3zM637 570h3v2h-3zM640 571h3v2h-3zM643 572h3v2h-3zM646 573h2v2h-2zM648 574h3v2h-3zM651 575h3v2h-3zM654 576h3v2h-3zM657 577h3v2h-3zM660 578h3v2h-3zM663 579h3v2h-3zM666 580h3v2h-3zM669 581h3v2h-3zM672 582h318v2h-318zM990 583h3v2h-3zM993 584h3v2h-3zM996 585h3v2h-3zM999 586h3v2h-3zM1002 587h3v2h-3zM1005 588h3v2h-3zM1008 589h3v2h-3zM1011 590h3v2h-3zM1014 591h3v2h-3zM1017 592h3v2h-3zM1020 593h3v2h-3zM1023 594h3v2h-3zM1026 595h3v2h-3zM1029 596h3v2h-3zM1032 597h3v2h-3zM1035 598h3v2h-3zM1038 599h3v2h-3zM1041 600h3v2h-3zM1044 601h3v2h-3zM1047 602h3v2h-3zM1050 603h3v2h-3zM1053 604h3v2h-3zM1056 605h3v2h-3zM1059 606h3v2h-3zM1062 607h3v2h-3zM1065 608h3v2h-3zM1068 609h3v2h-3zM1071 610h3v2h-3zM1074 611h3v2h-3zM1077 612h3v2h-3zM1080 613h3v2h-3zM1083 614h3v2h-3zM1086 615h115v2h-115zM1201 614h3v2h-3zM1204 613h3v2h-3zM1207 612h3v2h-3zM1210 611h3v2h-3zM1213 610h3v2h-3zM1216 609h3v2h-3zM1219 608h3v2h-3zM1222 607h3v2h-3zM1225 606h3v2h-3zM1228 605h3v2h-3zM1231 604h3v2h-3zM1234 603h3v2h-3zM1237 602h3v2h-3zM1240 601h3v2h-3zM1243 600h3v2h-3zM1246 599h4v2h-4zM1250 598h3v2h-3zM1253 597h3v2h-3zM1256 596h3v2h-3zM1259 595h3v2h-3zM1262 594h3v2h-3zM1265 593h3v2h-3zM1268 592h3v2h-3zM1271 591h3v2h-3zM1274 590h3v2h-3zM1277 589h3v2h-3zM1280 588h3v2h-3zM1283 587h3v2h-3zM1286 586h3v2h-3zM1289 585h3v2h-3zM1292 584h3v2h-3zM1295 583h3v2h-3zM1298 582h444v2h-444z" fill="#00cccc" shape-rendering="crispEdges"/>
<polyline points="0.0,583.0 47.0,583.0 48.6,777.0 203.0,777.0 205.0,388.0 358.8,388.0 359.3,437.5 361.0,291.0 461.5,291.0 464.2,583.0 571.0,583.0 573.0,874.0 673.0,874.0 674.2,864.0 675.2,583.0 986.4,583.0 988.0,931.0 988.6,874.0 1086.8,874.0 1088.0,850.0 1090.0,583.0 1197.4,583.0 1199.2,291.0 1299.5,291.0 1302.2,583.0 1742.0,583.0" stroke="#66cc00" fill="none" stroke-width="2" stroke-linejoin="miter" stroke-miterlimit="2"/>
<polyline points="0.0,583.0 46.0,583.0 47.5,680.0 49.0,583.0 52.7,583.0 53.2,582.0 53.7,583.0 54.7,583.0 55.2,581.5 55.7,583.0 60.4,583.0 60.9,581.0 61.4,583.0 62.4,583.0 62.9,581.0 63.4,583.0 64.4,583.0 64.9,583.8 65.4,583.0 67.9,583.0 68.4,583.8 68.9,583.0 71.2,583.0 71.7,582.0 72.2,583.0 75.7,583.0 76.2,582.0 76.7,583.0 79.1,583.0 79.6,584.6 80.1,583.0 81.4,583.0 81.9,584.6 82.4,583.0 83.7,583.0 84.2,582.0 84.7,583.0 87.0,583.0 87.5,584.2 88.0,583.0 90.6,583.0 91.1,581.5 91.6,583.0 96.5,583.0 97.0,582.0 97.5,583.0 100.2,583.0 100.7,580.4 101.2,583.0 102.8,583.0 103.3,581.5 103.8,583.0 106.5,583.0 107.0,582.0 107.5,583.0 108.7,583.0 109.2,581.5 109.7,583.0 110.9,583.0 111.4,582.0 111.9,583.0 115.3,583.0 115.8,580.4 116.3,583.0 121.3,583.0 121.8,584.6 122.3,583.0 126.4,583.0 126.9,581.5 127.4,583.0 129.5,583.0 130.0,583.8 130.5,583.0 133.2,583.0 133.7,580.4 134.2,583.0 140.3,583.0 140.8,581.5 141.3,583.0 142.2,583.0 142.7,582.0 143.2,583.0 145.6,583.0 146.1,582.0 146.6,583.0 149.5,583.0 150.0,582.0 150.5,583.0 155.5,583.0 156.0,581.0 156.5,583.0 165.3,583.0 165.8,581.5 166.3,583.0 169.0,583.0 169.5,582.0 170.0,583.0 171.2,583.0 171.7,582.0 172.2,583.0 174.8,583.0 175.3,580.4 175.8,583.0 177.1,583.0 177.6,582.0 178.1,583.0 180.0,583.0 180.5,580.4 181.0,583.0 182.6,583.0 183.1,580.4 183.6,583.0 187.0,583.0 187.5,584.6 188.0,583.0 196.8,583.0 197.3,581.0 197.8,583.0 199.7,583.0 200.2,581.0 200.7,583.0 201.8,583.0 202.9,388.0 204.2,583.0 207.2,583.0 207.7,582.0 208.2,583.0 209.3,583.0 209.8,583.8 210.3,583.0 211.1,583.0 211.6,582.0 212.1,583.0 215.4,583.0 215.9,583.8 216.4,583.0 219.6,583.0 220.1,583.8 220.6,583.0 226.5,583.0 227.0,582.0 227.5,583.0 233.7,583.0 234.2,582.0 234.7,583.0 239.7,583.0 240.2,582.0 240.7,583.0 242.9,583.0 243.4,580.4 243.9,583.0 245.7,583.0 246.2,583.8 246.7,583.0 249.5,583.0 250.0,582.0 250.5,583.0 253.2,583.0 253.7,581.5 254.2,583.0 257.4,583.0 257.9,582.0 258.4,583.0 263.4,583.0 263.9,582.0 264.4,583.0 271.1,583.0 271.6,580.4 272.1,583.0 281.8,583.0 282.3,580.4 282.8,583.0 286.2,583.0 286.7,581.5 287.2,583.0 290.6,583.0 291.1,582.0 291.6,583.0 292.6,583.0 293.1,581.5 293.6,583.0 295.0,583.0 295.5,584.6 296.0,583.0 299.1,583.0 299.6,581.5 300.1,583.0 303.0,583.0 303.5,582.0 304.0,583.0 311.1,583.0 311.6,582.0 312.1,583.0 314.1,583.0 314.6,583.8 315.1,583.0 320.9,583.0 321.4,582.0 321.9,583.0 324.7,583.0 325.2,582.0 325.7,583.0 326.5,583.0 327.0,584.2 327.5,583.0 330.5,583.0 331.0,580.4 331.5,583.0 335.0,583.0 335.5,584.2 336.0,583.0 337.2,583.0 337.7,582.0 338.2,583.0 342.6,583.0 343.1,582.0 343.6,583.0 349.6,583.0 350.1,581.5 350.6,583.0 352.0,583.0 352.5,580.4 353.0,583.0 354.6,583.0 355.1,582.0 355.6,583.0 357.8,583.0 359.2,670.0 360.2,437.0 361.2,583.0 377.0,583.0 377.5,582.0 378.0,583.0 380.2,583.0 380.7,581.0 381.2,583.0 384.1,583.0 384.6,583.8 385.1,583.0 386.3,583.0 386.8,582.0 387.3,583.0 389.6,583.0 390.1,580.4 390.6,583.0 392.9,583.0 393.4,582.0 393.9,583.0 397.0,583.0 397.5,582.0 398.0,583.0 402.8,583.0 403.3,583.8 403.8,583.0 405.8,583.0 406.3,584.6 406.8,583.0 409.2,583.0 409.7,581.5 410.2,583.0 412.2,583.0 412.7,581.0 413.2,583.0 415.4,583.0 415.9,580.4 416.4,583.0 422.1,583.0 422.6,583.8 423.1,583.0 426.1,583.0 426.6,582.0 427.1,583.0 429.0,583.0 429.5,582.0 430.0,583.0 431.9,583.0 432.4,581.5 432.9,583.0 441.7,583.0 442.2,582.0 442.7,583.0 446.1,583.0 446.6,582.0 447.1,583.0 448.9,583.0 449.4,582.0 449.9,583.0 451.2,583.0 451.7,580.4 452.2,583.0 454.1,583.0 454.6,581.5 455.1,583.0 460.0,583.0 462.0,728.0 464.0,583.0 468.3,583.0 468.8,582.0 469.3,583.0 471.1,583.0 471.6,581.5 472.1,583.0 474.3,583.0 474.8,582.0 475.3,583.0 478.7,583.0 479.2,581.5 479.7,583.0 494.1,583.0 494.6,580.4 495.1,583.0 499.5,583.0 500.0,582.0 500.5,583.0 502.4,583.0 502.9,582.0 503.4,583.0 513.0,583.0 513.5,580.4 514.0,583.0 519.4,583.0 519.9,582.0 520.4,583.0 526.2,583.0 526.7,581.5 527.2,583.0 529.7,583.0 530.2,582.0 530.7,583.0 532.3,583.0 532.8,582.0 533.3,583.0 539.3,583.0 539.8,582.0 540.3,583.0 543.1,583.0 543.6,583.8 544.1,583.0 546.3,583.0 546.8,581.0 547.3,583.0 551.3,583.0 551.8,581.0 552.3,583.0 555.8,583.0 556.3,582.0 556.8,583.0 560.2,583.0 560.7,582.0 561.2,583.0 563.1,583.0 563.6,582.0 564.1,583.0 567.2,583.0 567.7,581.5 568.2,583.0 569.9,583.0 571.6,729.0 573.4,583.0 576.3,583.0 576.8,584.2 577.3,583.0 580.5,583.0 581.0,584.2 581.5,583.0 583.9,583.0 584.4,583.8 584.9,583.0 587.0,583.0 587.5,581.0 588.0,583.0 588.8,583.0 589.3,581.5 589.8,583.0 593.2,583.0 593.7,582.0 594.2,583.0 597.5,583.0 598.0,581.5 598.5,583.0 600.3,583.0 600.8,580.4 601.3,583.0 603.9,583.0 604.4,582.0 604.9,583.0 608.1,583.0 608.6,584.2 609.1,583.0 610.0,583.0 610.5,582.0 611.0,583.0 616.1,583.0 616.6,580.4 617.1,583.0 619.0,583.0 619.5,581.0 620.0,583.0 624.7,583.0 625.2,580.4 625.7,583.0 632.2,583.0 632.7,580.4 633.2,583.0 636.0,583.0 636.5,583.8 637.0,583.0 640.0,583.0 640.5,584.6 641.0,583.0 643.7,583.0 644.2,583.8 644.7,583.0 645.7,583.0 646.2,581.5 646.7,583.0 650.1,583.0 650.6,581.0 651.1,583.0 653.4,583.0 653.9,584.6 654.4,583.0 656.7,583.0 657.2,581.5 657.7,583.0 662.3,583.0 662.8,580.4 663.3,583.0 664.3,583.0 664.8,581.0 665.3,583.0 666.8,583.0 667.3,581.5 667.8,583.0 672.0,583.0 673.3,573.0 673.8,377.0 674.5,573.0 675.8,583.0 985.5,583.0 986.8,810.0 988.0,526.0 988.7,583.0 993.3,583.0 993.8,581.0 994.3,583.0 997.8,583.0 998.3,582.0 998.8,583.0 999.8,583.0 1000.3,581.5 1000.8,583.0 1003.4,583.0 1003.9,584.6 1004.4,583.0 1006.7,583.0 1007.2,582.0 1007.7,583.0 1011.9,583.0 1012.4,581.0 1012.9,583.0 1014.5,583.0 1015.0,581.0 1015.5,583.0 1022.0,583.0 1022.5,581.5 1023.0,583.0 1028.3,583.0 1028.8,580.4 1029.3,583.0 1032.7,583.0 1033.2,581.5 1033.7,583.0 1039.9,583.0 1040.4,582.0 1040.9,583.0 1042.1,583.0 1042.6,581.5 1043.1,583.0 1051.1,583.0 1051.6,581.0 1052.1,583.0 1054.0,583.0 1054.5,581.0 1055.0,583.0 1057.6,583.0 1058.1,582.0 1058.6,583.0 1060.5,583.0 1061.0,582.0 1061.5,583.0 1064.6,583.0 1065.1,581.5 1065.6,583.0 1068.7,583.0 1069.2,582.0 1069.7,583.0 1075.0,583.0 1075.5,581.0 1076.0,583.0 1085.8,583.0 1088.0,438.0 1090.2,583.0 1093.1,583.0 1093.6,584.6 1094.1,583.0 1097.5,583.0 1098.0,581.5 1098.5,583.0 1100.4,583.0 1100.9,581.5 1101.4,583.0 1104.4,583.0 1104.9,582.0 1105.4,583.0 1108.4,583.0 1108.9,584.6 1109.4,583.0 1120.1,583.0 1120.6,582.0 1121.1,583.0 1124.4,583.0 1124.9,583.8 1125.4,583.0 1127.5,583.0 1128.0,581.5 1128.5,583.0 1133.5,583.0 1134.0,582.0 1134.5,583.0 1136.1,583.0 1136.6,584.2 1137.1,583.0 1138.3,583.0 1138.8,583.8 1139.3,583.0 1143.8,583.0 1144.3,581.5 1144.8,583.0 1148.2,583.0 1148.7,582.0 1149.2,583.0 1151.5,583.0 1152.0,582.0 1152.5,583.0 1154.3,583.0 1154.8,582.0 1155.3,583.0 1159.4,583.0 1159.9,581.0 1160.4,583.0 1164.6,583.0 1165.1,582.0 1165.6,583.0 1167.7,583.0 1168.2,584.2 1168.7,583.0 1169.9,583.0 1170.4,582.0 1170.9,583.0 1174.8,583.0 1175.3,584.2 1175.8,583.0 1183.3,583.0 1183.8,582.0 1184.3,583.0 1193.3,583.0 1193.8,580.4 1194.3,583.0 1196.3,583.0 1197.4,438.0 1198.9,583.0 1204.3,583.0 1204.8,582.0 1205.3,583.0 1206.7,583.0 1207.2,582.0 1207.7,583.0 1217.7,583.0 1218.2,583.8 1218.7,583.0 1219.5,583.0 1220.0,580.4 1220.5,583.0 1223.7,583.0 1224.2,584.2 1224.7,583.0 1228.1,583.0 1228.6,584.6 1229.1,583.0 1231.7,583.0 1232.2,583.8 1232.7,583.0 1233.7,583.0 1234.2,580.4 1234.7,583.0 1236.0,583.0 1236.5,580.4 1237.0,583.0 1237.8,583.0 1238.3,581.0 1238.8,583.0 1240.4,583.0 1240.9,582.0 1241.4,583.0 1243.5,583.0 1244.0,582.0 1244.5,583.0 1245.4,583.0 1245.9,581.5 1246.4,583.0 1247.3,583.0 1247.8,581.0 1248.3,583.0 1249.3,583.0 1249.8,581.0 1250.3,583.0 1253.6,583.0 1254.1,582.0 1254.6,583.0 1260.1,583.0 1260.6,582.0 1261.1,583.0 1267.2,583.0 1267.7,582.0 1268.2,583.0 1272.3,583.0 1272.8,581.5 1273.3,583.0 1274.4,583.0 1274.9,584.6 1275.4,583.0 1276.7,583.0 1277.2,581.0 1277.7,583.0 1280.9,583.0 1281.4,580.4 1281.9,583.0 1283.1,583.0 1283.6,582.0 1284.1,583.0 1285.0,583.0 1285.5,584.2 1286.0,583.0 1286.9,583.0 1287.4,581.0 1287.9,583.0 1292.6,583.0 1293.1,582.0 1293.6,583.0 1297.8,583.0 1300.0,800.0 1302.2,583.0 1742.0,583.0" stroke="#6600cc" fill="none" stroke-width="2" stroke-linejoin="miter" stroke-miterlimit="2"/>
<line x1="1742" y1="583" x2="1762" y2="583" stroke="#8a8a8a" stroke-width="2" shape-rendering="crispEdges"/>
</svg>
<div id="hs"><div id="hs-client"></div></div><div id="hs-tl"></div>
<div class="hb" style="left:491px;top:12px"></div>
<div class="hb" style="left:491px;top:16px"></div>
<div class="hb" style="left:491px;top:20px"></div>
<span class="ttl" style="left:801.61px;top:10.00px;letter-spacing:-0.011px;">Halshow</span>
<div style="left:1093px;top:19px;width:8px;height:2px;background:#a2a2a2"></div>
<div style="left:1127px;top:13px;width:8px;height:8px;border:2px solid #a2a2a2"></div>
<svg style="left:1160px;top:12px" width="10" height="10" viewBox="0 0 10 10"><path d="M1.7 1.7L8.3 8.3M8.3 1.7L1.7 8.3" stroke="#a2a2a2" stroke-width="1.8" fill="none"/></svg>
<div style="left:478px;top:36px;width:705px;height:34px;border-top:1px solid #fff;border-left:1px solid #fff;border-bottom:1px solid #828282;border-right:1px solid #828282"></div>
<span class="k" style="left:485.34px;top:46.00px;letter-spacing:0.681px;">File</span>
<span class="k" style="left:521.90px;top:46.00px;letter-spacing:0.560px;">Tree View</span>
<span class="k" style="left:598.96px;top:46.00px;letter-spacing:1.142px;">Watch</span>
<div class="sunk1" style="left:485px;top:75px;width:157px;height:23px;background:#fff"></div>
<span class="k" style="left:486.51px;top:80.00px;letter-spacing:0.800px;color:#9fa4ab;-webkit-text-stroke:0">Filter tree</span>
<svg style="left:646px;top:78px" width="15" height="15" viewBox="0 0 15 15"><path d="M6.42 1.29L8.58 1.29L8.57 3.03L9.90 3.58L11.12 2.35L12.65 3.88L11.42 5.10L11.97 6.43L13.71 6.42L13.71 8.58L11.97 8.57L11.42 9.90L12.65 11.12L11.12 12.65L9.90 11.42L8.57 11.97L8.58 13.71L6.42 13.71L6.43 11.97L5.10 11.42L3.88 12.65L2.35 11.12L3.58 9.90L3.03 8.57L1.29 8.58L1.29 6.42L3.03 6.43L3.58 5.10L2.35 3.88L3.88 2.35L5.10 3.58L6.43 3.03Z" fill="#e4e4e2" stroke="#8e8e8c" stroke-width="1.1" stroke-linejoin="round"/><circle cx="7.5" cy="7.5" r="2.3" fill="#cfcfcf" stroke="#8e8e8c" stroke-width="1.2"/></svg>
<svg style="left:670px;top:85px" width="9" height="7" viewBox="0 0 9 7"><path d="M1.2 0.9L3.6 3.5L1.2 6.1M4.8 0.9L7.2 3.5L4.8 6.1" stroke="#000" stroke-width="1.5" fill="none"/></svg>
<div class="sunk2" style="left:485px;top:101px;width:184px;height:126px"></div>
<div style="left:495px;top:103px;width:1px;height:79px;background:#000"></div>
<div style="left:491px;top:106px;width:9px;height:9px;border:1px solid #000;background:#efefef"></div>
<div style="left:493px;top:110px;width:5px;height:1px;background:#000"></div>
<div style="left:495px;top:108px;width:1px;height:5px;background:#000"></div>
<div style="left:500px;top:110px;width:10px;height:1px;background:#000"></div>
<span class="k" style="left:529.88px;top:104.00px;letter-spacing:0.525px;">Components</span>
<div style="left:491px;top:121px;width:9px;height:9px;border:1px solid #000;background:#efefef"></div>
<div style="left:493px;top:125px;width:5px;height:1px;background:#000"></div>
<div style="left:495px;top:123px;width:1px;height:5px;background:#000"></div>
<div style="left:500px;top:125px;width:10px;height:1px;background:#000"></div>
<span class="k" style="left:529.34px;top:119.00px;letter-spacing:0.454px;">Pins</span>
<div style="left:491px;top:136px;width:9px;height:9px;border:1px solid #000;background:#efefef"></div>
<div style="left:493px;top:140px;width:5px;height:1px;background:#000"></div>
<div style="left:495px;top:138px;width:1px;height:5px;background:#000"></div>
<div style="left:500px;top:140px;width:10px;height:1px;background:#000"></div>
<span class="k" style="left:529.34px;top:134.00px;letter-spacing:0.966px;">Parameters</span>
<div style="left:491px;top:151px;width:9px;height:9px;border:1px solid #000;background:#efefef"></div>
<div style="left:493px;top:155px;width:5px;height:1px;background:#000"></div>
<div style="left:495px;top:153px;width:1px;height:5px;background:#000"></div>
<div style="left:500px;top:155px;width:10px;height:1px;background:#000"></div>
<span class="k" style="left:529.35px;top:149.00px;letter-spacing:0.473px;">Signals</span>
<div style="left:491px;top:166px;width:9px;height:9px;border:1px solid #000;background:#efefef"></div>
<div style="left:493px;top:170px;width:5px;height:1px;background:#000"></div>
<div style="left:495px;top:168px;width:1px;height:5px;background:#000"></div>
<div style="left:500px;top:170px;width:10px;height:1px;background:#000"></div>
<span class="k" style="left:529.34px;top:164.00px;letter-spacing:0.551px;">Functions</span>
<div style="left:491px;top:181px;width:9px;height:9px;border:1px solid #000;background:#efefef"></div>
<div style="left:493px;top:185px;width:5px;height:1px;background:#000"></div>
<div style="left:495px;top:183px;width:1px;height:5px;background:#000"></div>
<div style="left:500px;top:185px;width:10px;height:1px;background:#000"></div>
<span class="k" style="left:530.20px;top:179.00px;letter-spacing:0.602px;">Threads</span>
<div style="left:670px;top:100px;width:14px;height:128px;background:#b8b8b8;border-top:1px solid #828282;border-left:1px solid #828282;border-right:1px solid #fff;border-bottom:1px solid #fff"></div>
<svg style="left:671px;top:101px" width="12" height="13" viewBox="0 0 12 13"><path d="M6.0 0.5L11.5 11.5L0.5 11.5Z" fill="#d9d9d9"/><path d="M0.5 11.5L6.0 0.8" stroke="#fff" stroke-width="1.2" fill="none"/><path d="M6.0 0.8L11.5 11.5L0.5 11.5" stroke="#828282" stroke-width="1.2" fill="none"/></svg>
<svg style="left:671px;top:215px" width="12" height="12" viewBox="0 0 12 12"><path d="M0.5 0.5L11.5 0.5L6.0 11.4Z" fill="#d9d9d9"/><path d="M6.0 11.4L0.5 0.7L11.5 0.7" stroke="#fff" stroke-width="1.2" fill="none"/><path d="M11.5 0.7L6.0 11.4" stroke="#828282" stroke-width="1.2" fill="none"/></svg>
<div style="left:671px;top:114px;width:12px;height:101px;background:#d9d9d9;border-top:1px solid #fff;border-left:1px solid #fff;border-right:1px solid #828282;border-bottom:2px solid #828282"></div>
<div style="left:1151px;top:109px;width:14px;height:106px;background:#b8b8b8;border-top:1px solid #828282;border-left:1px solid #828282;border-right:1px solid #fff;border-bottom:1px solid #fff"></div>
<svg style="left:1152px;top:110px" width="12" height="13" viewBox="0 0 12 13"><path d="M6.0 0.5L11.5 11.5L0.5 11.5Z" fill="#d9d9d9"/><path d="M0.5 11.5L6.0 0.8" stroke="#fff" stroke-width="1.2" fill="none"/><path d="M6.0 0.8L11.5 11.5L0.5 11.5" stroke="#828282" stroke-width="1.2" fill="none"/></svg>
<svg style="left:1152px;top:202px" width="12" height="12" viewBox="0 0 12 12"><path d="M0.5 0.5L11.5 0.5L6.0 11.4Z" fill="#d9d9d9"/><path d="M6.0 11.4L0.5 0.7L11.5 0.7" stroke="#fff" stroke-width="1.2" fill="none"/><path d="M11.5 0.7L6.0 11.4" stroke="#828282" stroke-width="1.2" fill="none"/></svg>
<div style="left:1152px;top:123px;width:12px;height:79px;background:#d9d9d9;border-top:1px solid #fff;border-left:1px solid #fff;border-right:1px solid #828282;border-bottom:2px solid #828282"></div>
<div style="left:688px;top:140px;width:1px;height:20px;background:#fff"></div>
<div style="left:689px;top:140px;width:1px;height:20px;background:#828282"></div>
<div style="left:692px;top:98px;width:485px;height:130px;border-top:1px solid #fff;border-left:1px solid #fff;border-right:1px solid #828282;border-bottom:1px solid #828282"></div>
<div style="left:694px;top:75px;width:61px;height:23px;border-left:1px solid #fff;border-top:1px solid #fff;border-radius:3px 0 0 0"></div>
<div style="left:827px;top:75px;width:84px;height:23px;border-top:1px solid #fff;border-right:1px solid #828282;border-radius:0 3px 0 0"></div>
<div style="left:754px;top:73px;width:73px;height:26px;background:#d9d9d9;border-left:1px solid #fff;border-top:1px solid #fff;border-right:1px solid #828282;border-radius:3px 3px 0 0"></div>
<span class="k" style="left:703.05px;top:81.00px;letter-spacing:-0.412px;">SHOW</span>
<span class="k" style="left:765.76px;top:79.00px;letter-spacing:0.238px;">WATCH</span>
<span class="k" style="left:835.05px;top:81.00px;letter-spacing:-0.428px;">SETTINGS</span>
<span class="k" style="left:707.98px;top:113.00px;letter-spacing:0.000px;">1</span>
<span class="k" style="left:797.45px;top:114.00px;letter-spacing:0.659px;">ini.traj_planner_type</span>
<div style="left:708px;top:130px;width:385px;height:1px;background:#a9a9a9"></div>
<div class="sv" style="left:1097px;top:111px;width:53px;height:18px"></div>
<span class="k" style="left:1101.15px;top:114.00px;letter-spacing:0.392px;">Set val</span>
<span class="k" style="left:707.98px;top:133.00px;letter-spacing:0.609px;">1000</span>
<span class="k" style="left:797.45px;top:134.00px;letter-spacing:0.926px;">ini.0.jerk</span>
<div style="left:708px;top:150px;width:385px;height:1px;background:#a9a9a9"></div>
<div class="sv" style="left:1097px;top:131px;width:53px;height:18px"></div>
<span class="k" style="left:1101.15px;top:134.00px;letter-spacing:0.392px;">Set val</span>
<span class="k" style="left:707.93px;top:153.00px;letter-spacing:0.753px;">800</span>
<span class="k" style="left:797.45px;top:154.00px;letter-spacing:0.742px;">ini.0.max_acceleration</span>
<div style="left:708px;top:170px;width:385px;height:1px;background:#a9a9a9"></div>
<div class="sv" style="left:1097px;top:151px;width:53px;height:18px"></div>
<span class="k" style="left:1101.15px;top:154.00px;letter-spacing:0.392px;">Set val</span>
<span class="k" style="left:707.94px;top:173.00px;letter-spacing:0.732px;">300</span>
<span class="k" style="left:797.45px;top:174.00px;letter-spacing:0.671px;">ini.0.max_velocity</span>
<div class="sv" style="left:1097px;top:171px;width:53px;height:18px"></div>
<span class="k" style="left:1101.15px;top:174.00px;letter-spacing:0.392px;">Set val</span>
<span class="k" style="left:484.34px;top:244.00px;letter-spacing:0.597px;">HAL command :</span>
<div class="sunk1" style="left:594px;top:239px;width:500px;height:23px;background:#fff"></div>
<div style="left:1101px;top:235px;width:76px;height:31px;border-top:1px solid #fff;border-left:1px solid #fff;border-right:1px solid #828282;border-bottom:1px solid #828282"></div>
<span class="k" style="left:1113.23px;top:244.00px;letter-spacing:0.395px;-webkit-text-stroke:0.15px #000">Execute</span>
<div class="sunk2" style="left:484px;top:271px;width:679px;height:25px"></div>
<span id="k-mono" style="left:487.4px;top:278px">Commands may be tested here but they will NOT be saved</span>
<svg style="left:1166px;top:285px" width="17" height="17" viewBox="0 0 17 17"><g fill="none" stroke-width="1"><path d="M1 17L17 1M5 17L17 5M9 17L17 9M13 17L17 13" stroke="#828282"/><path d="M2 17L17 2M6 17L17 6M10 17L17 10M14 17L17 14" stroke="#fff"/></g></svg>
</div>
</body></html>
